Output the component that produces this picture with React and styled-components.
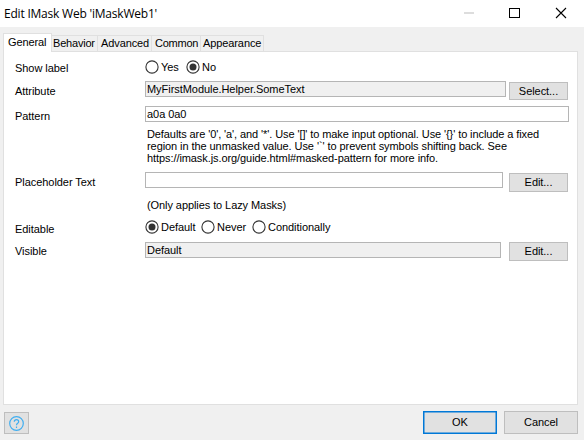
import React from "react";
import styled, { createGlobalStyle } from "styled-components";

const Global = createGlobalStyle`
  * { box-sizing: border-box; }
  body { margin: 0; overflow: hidden; }
`;

const Dialog = styled.div`
  width: 584px;
  height: 440px;
  display: flex;
  flex-direction: column;
  background: #f0f0f0;
  color: #000;
  font: 11px/14px "Liberation Sans", Arial, sans-serif;
  white-space: nowrap;
`;

const TitleBar = styled.header`
  height: 27px;
  display: flex;
  justify-content: space-between;
  background: #fff;
`;

const Title = styled.h1`
  margin: 5px 0 0 4px;
  font: 400 12px/18px "Open Sans", "Noto Sans", sans-serif;
  letter-spacing: ${(p) => p.$spacing}px;
`;

const Controls = styled.svg`
  width: 120px;
  height: 27px;
`;

const Text = styled.span`
  letter-spacing: ${(p) => p.$spacing ?? -0.05}px;
`;

const Tabs = styled.nav`
  height: 24px;
  margin-left: 3px;
  display: flex;
  align-items: flex-end;
`;

const Tab = styled.div`
  width: ${(p) => p.$width}px;
  height: ${(p) => (p.$active ? 19 : 16)}px;
  padding: ${(p) => (p.$active ? "1px 0 0 4px" : `0 0 0 ${p.$inset}px`)};
  border: 1px solid #e0e0e0;
  border-bottom: 0;
  border-left-width: ${(p) => (p.$active ? 1 : 0)}px;
  background: ${(p) => (p.$active ? "#fff" : "#f0f0f0")};
  margin-bottom: ${(p) => (p.$active ? -1 : 0)}px;
  position: relative;
`;

const Panel = styled.main`
  width: 575px;
  height: 354px;
  margin-left: 3px;
  padding: 6px 8px 0 11px;
  border: 1px solid #e0e0e0;
  background: #fff;
`;

const Row = styled.section`
  display: grid;
  grid-template-columns: 130px 1fr;
  height: ${(p) => p.$height}px;
`;

const Label = styled.div`
  padding-top: ${(p) => p.$top ?? 3}px;
`;

const Line = styled.div`
  display: flex;
  justify-content: space-between;
  padding-right: 1px;
`;

const Field = styled.div`
  width: ${(p) => p.$width}px;
  height: 16px;
  padding-left: 1px;
  border: 1px solid #b5b5b5;
  background: ${(p) => (p.$readOnly ? "#f0f0f0" : "#fff")};
`;

const Note = styled.p`
  display: flex;
  flex-direction: column;
  margin: ${(p) => p.$top}px 0 0 2px;
  line-height: 12px;
`;

const Button = styled.button`
  width: ${(p) => p.$width ?? 59}px;
  height: ${(p) => p.$height ?? 19}px;
  margin: ${(p) => p.$top ?? 0}px 0 0;
  padding: 0 0 ${(p) => p.$lift ?? 2}px;
  border: ${(p) => (p.$primary ? "1px solid #0078d7" : "1px solid #bebebe")};
  box-shadow: ${(p) => (p.$primary ? "inset 0 0 0 0.5px #0078d7" : "none")};
  background: #e1e1e1;
  color: #000;
  font: inherit;
  line-height: 14px;
`;

const Radios = styled.div`
  display: flex;
  padding-top: 2px;
`;

const Option = styled.div`
  display: flex;
  gap: 2px;
  width: ${(p) => p.$width}px;
`;

const Dot = styled.svg`
  flex: none;
  width: 14px;
  height: 14px;
`;

const Footer = styled.footer`
  height: 35px;
  padding: 6px 6px 0 4px;
  display: flex;
`;

const Help = styled(Button)`
  margin: 1px auto 0 0;
  padding: 1px 0 0;
  display: flex;
  align-items: center;
  justify-content: center;
`;

const Actions = styled.div`
  display: flex;
  gap: 7px;
`;

function Radio({ label, checked, width, spacing }) {
  return (
    <Option $width={width}>
      <Dot viewBox="0 0 14 14">
        <circle cx="7" cy="7" r="6.1" fill="#fff" stroke="#333" strokeWidth="1.1" />
        {checked && <circle cx="7" cy="7" r="3.5" fill="#333" />}
      </Dot>
      <Text $spacing={spacing}>{label}</Text>
    </Option>
  );
}

export default function App() {
  return (
    <>
      <Global />
      <Dialog>
        <TitleBar>
          <Title $spacing={-0.21}>Edit IMask Web 'iMaskWeb1'</Title>
          <Controls viewBox="464 0 120 27" fill="none">
            <path d="M464 13H474" stroke="#ddd" strokeWidth="2" />
            <path d="M509 8.5H520M509 17.5H520" stroke="#000" />
            <path d="M509.5 8V18M519.5 8V18" stroke="#000" />
            <path d="M556 8L566 18M566 8L556 18" stroke="#000" strokeWidth="1.1" />
          </Controls>
        </TitleBar>
        <Tabs>
          <Tab $active $width={49}><Text $spacing={-0.1}>General</Text></Tab>
          <Tab $width={46} $inset={1}><Text $spacing={-0.2}>Behavior</Text></Tab>
          <Tab $width={54} $inset={3}><Text $spacing={-0.1}>Advanced</Text></Tab>
          <Tab $width={49} $inset={3}><Text $spacing={-0.25}>Common</Text></Tab>
          <Tab $width={63} $inset={2}><Text $spacing={-0.1}>Appearance</Text></Tab>
        </Tabs>
        <Panel>
          <Row $height={23}>
            <Label $top={3}><Text>Show label</Text></Label>
            <Radios>
              <Radio label="Yes" width={41} />
              <Radio label="No" checked width={40} />
            </Radios>
          </Row>
          <Row $height={25}>
            <Label><Text>Attribute</Text></Label>
            <Line>
              <Field $readOnly $width={361}><Text>MyFirstModule.Helper.SomeText</Text></Field>
              <Button $top={1} $height={18} $lift={0}><Text>Select...</Text></Button>
            </Line>
          </Row>
          <Row $height={66}>
            <Label><Text>Pattern</Text></Label>
            <div>
              <Field $width={424}><Text>a0a 0a0</Text></Field>
              <Note $top={6}>
                <Text $spacing={-0.095}>Defaults are '0', 'a', and '*'. Use '[]' to make input optional. Use '{"{}"}' to include a fixed</Text>
                <Text $spacing={-0.075}>region in the unmasked value. Use '`' to prevent symbols shifting back. See</Text>
                <Text $spacing={-0.08}>https://imask.js.org/guide.html#masked-pattern for more info.</Text>
              </Note>
            </div>
          </Row>
          <Row $height={46}>
            <Label><Text>Placeholder Text</Text></Label>
            <div>
              <Line>
                <Field $width={358} />
                <Button $top={1}><Text>Edit...</Text></Button>
              </Line>
              <Note $top={7}><Text $spacing={-0.08}>(Only applies to Lazy Masks)</Text></Note>
            </div>
          </Row>
          <Row $height={24}>
            <Label $top={4}><Text>Editable</Text></Label>
            <Radios>
              <Radio label="Default" checked width={56} />
              <Radio label="Never" width={51} />
              <Radio label="Conditionally" width={90} />
            </Radios>
          </Row>
          <Row $height={20}>
            <Label $top={2}><Text>Visible</Text></Label>
            <Line>
              <Field $readOnly $width={356}><Text>Default</Text></Field>
              <Button><Text>Edit...</Text></Button>
            </Line>
          </Row>
        </Panel>
        <Footer>
          <Help $width={25} $height={22} aria-label="Help">
            <svg width="15" height="15" viewBox="0 0 15 15" fill="none" stroke="#40aef0">
              <circle cx="7.5" cy="7.5" r="6.8" strokeWidth="1.2" />
              <path d="M5.3 5.8C5.3 3 9.7 3 9.7 5.8C9.7 7.4 7.5 7.3 7.5 9.2M7.5 10.5V12" strokeWidth="1.2" />
            </svg>
          </Help>
          <Actions>
            <Button $primary $width={74} $height={23}><Text>OK</Text></Button>
            <Button $width={74} $height={23}><Text>Cancel</Text></Button>
          </Actions>
        </Footer>
      </Dialog>
    </>
  );
}
